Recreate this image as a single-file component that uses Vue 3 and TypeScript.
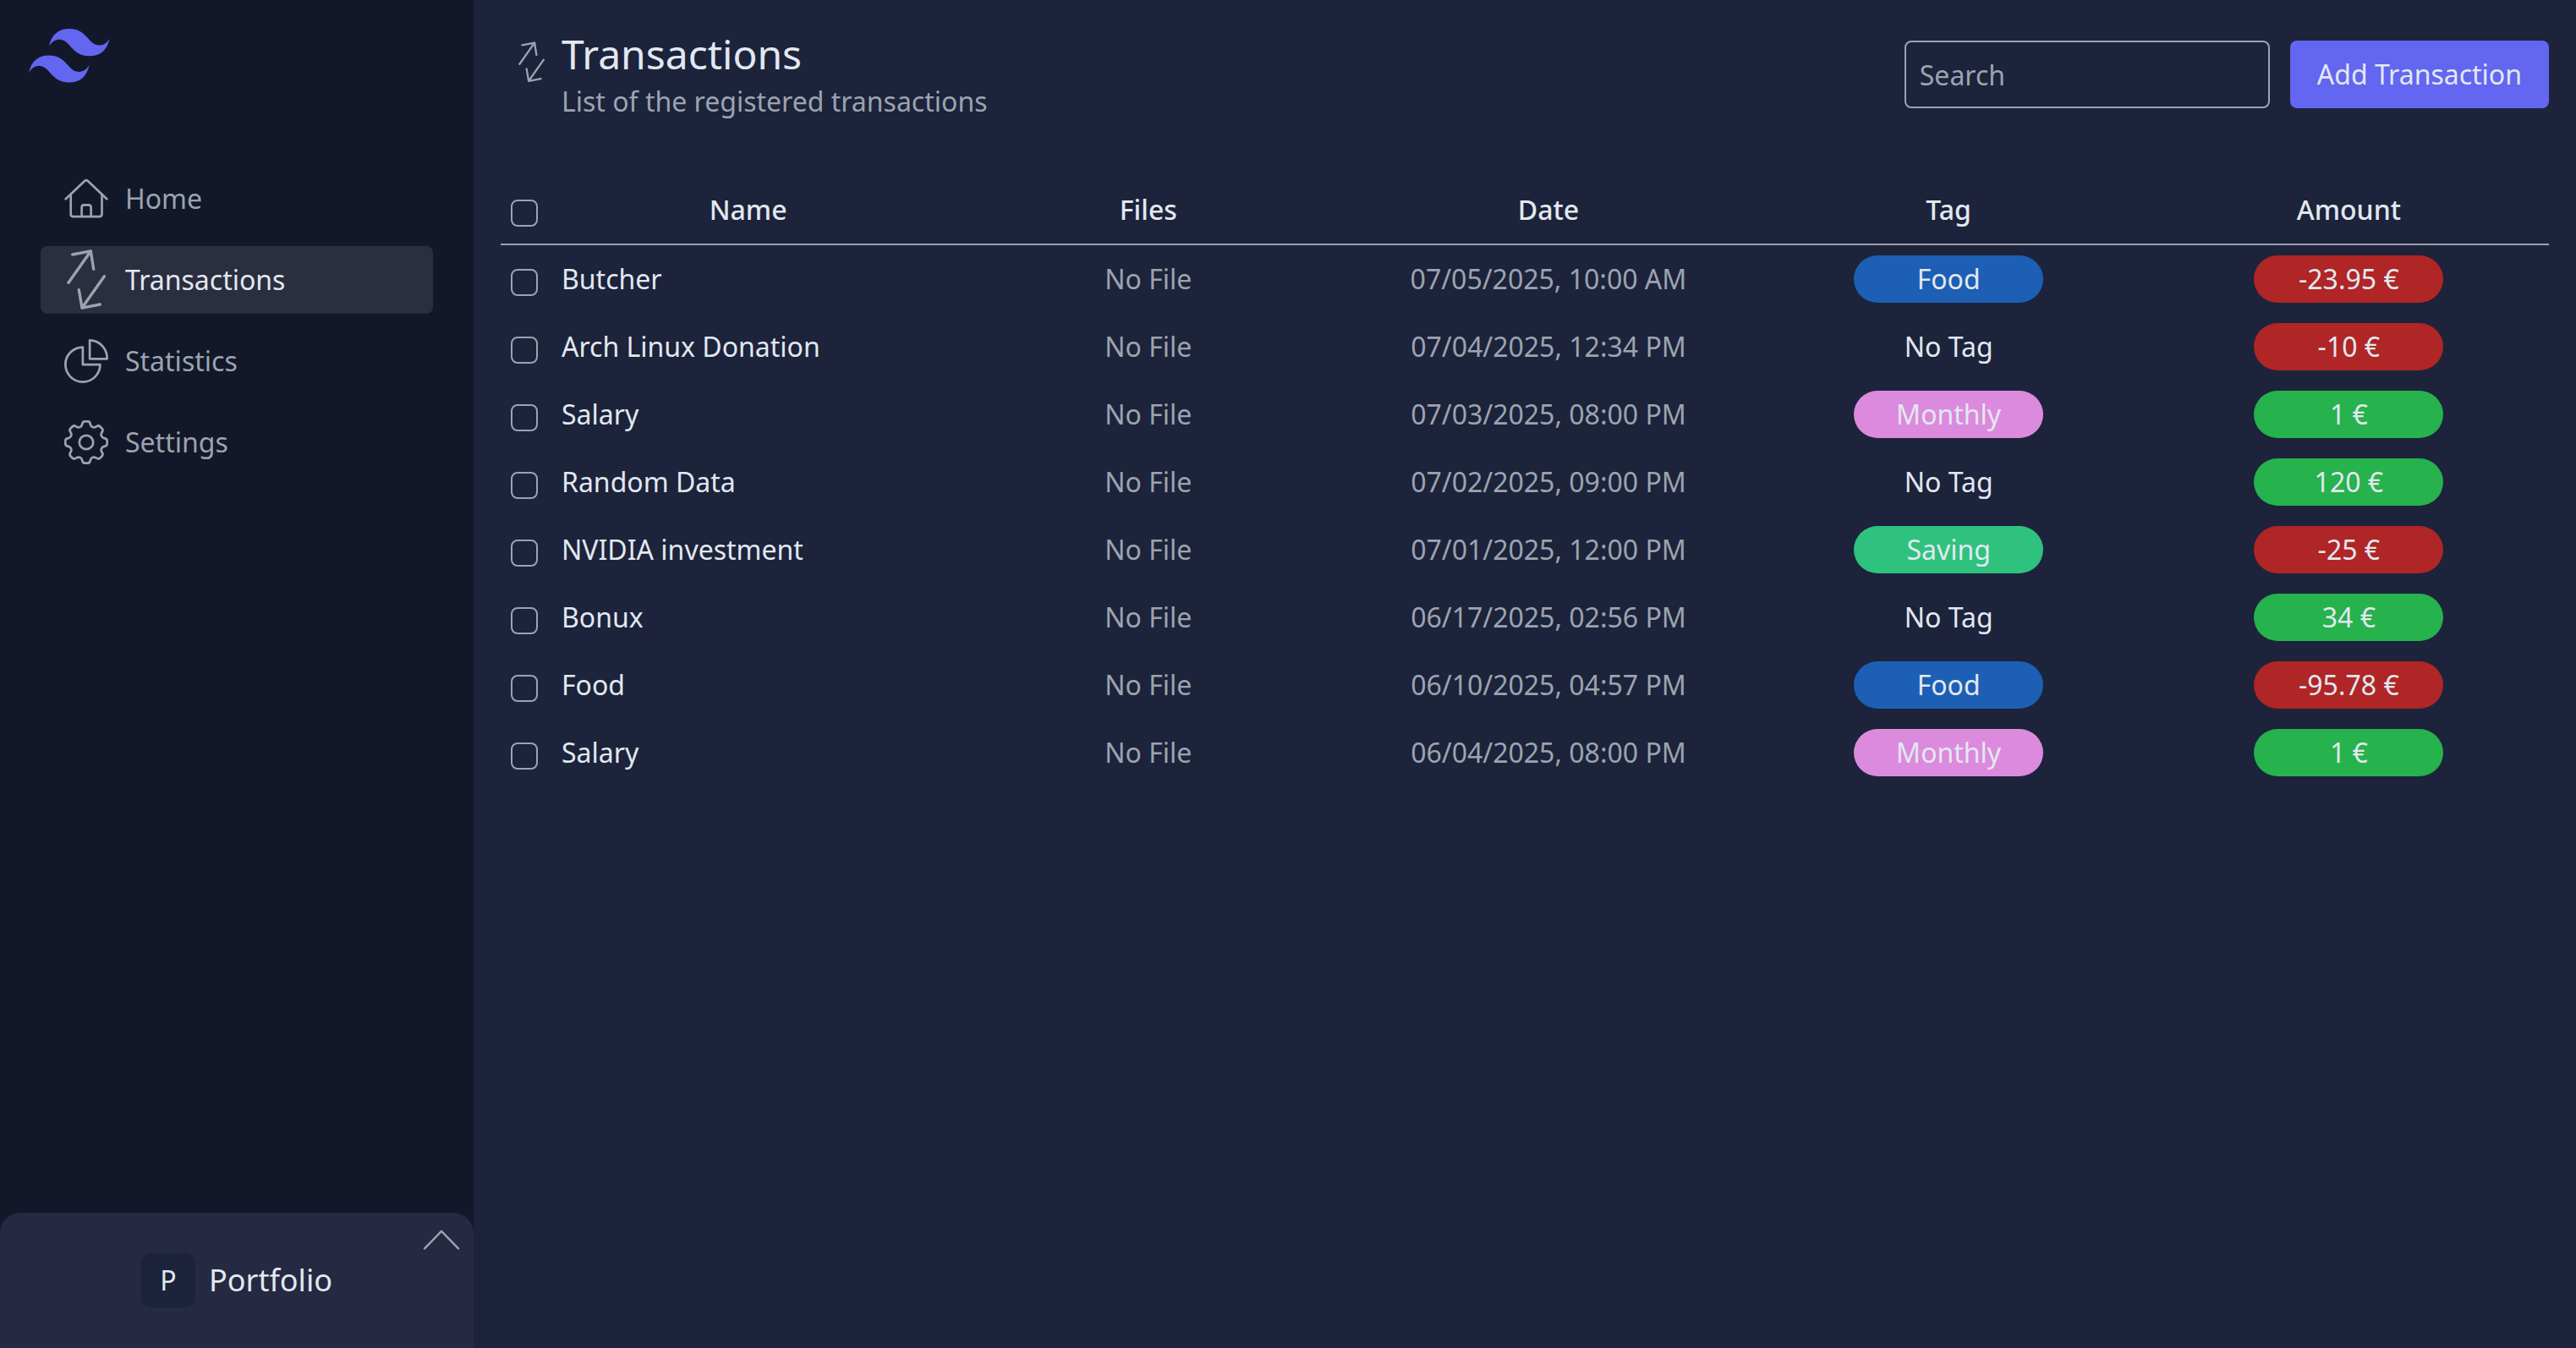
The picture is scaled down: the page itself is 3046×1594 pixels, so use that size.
<script setup lang="ts">
import { computed, ref } from 'vue'

interface Tag {
  label: string
  color: string
}

interface Transaction {
  id: number
  name: string
  date: string
  tag: Tag | null
  amount: number
}

interface NavItem {
  label: string
  icon: 'home' | 'transactions' | 'statistics' | 'settings'
}

const navItems: NavItem[] = [
  { label: 'Home', icon: 'home' },
  { label: 'Transactions', icon: 'transactions' },
  { label: 'Statistics', icon: 'statistics' },
  { label: 'Settings', icon: 'settings' },
]
const activeItem = ref('Transactions')

const food: Tag = { label: 'Food', color: '#1c5fb4' }
const monthly: Tag = { label: 'Monthly', color: '#dc8add' }
const saving: Tag = { label: 'Saving', color: '#2ec27e' }

const transactions: Transaction[] = [
  { id: 1, name: 'Butcher', date: '07/05/2025, 10:00 AM', tag: food, amount: -23.95 },
  { id: 2, name: 'Arch Linux Donation', date: '07/04/2025, 12:34 PM', tag: null, amount: -10 },
  { id: 3, name: 'Salary', date: '07/03/2025, 08:00 PM', tag: monthly, amount: 1 },
  { id: 4, name: 'Random Data', date: '07/02/2025, 09:00 PM', tag: null, amount: 120 },
  { id: 5, name: 'NVIDIA investment', date: '07/01/2025, 12:00 PM', tag: saving, amount: -25 },
  { id: 6, name: 'Bonux', date: '06/17/2025, 02:56 PM', tag: null, amount: 34 },
  { id: 7, name: 'Food', date: '06/10/2025, 04:57 PM', tag: food, amount: -95.78 },
  { id: 8, name: 'Salary', date: '06/04/2025, 08:00 PM', tag: monthly, amount: 1 },
]

const search = ref('')
const selected = ref<number[]>([])

const visible = computed(() =>
  transactions.filter((t) => t.name.toLowerCase().includes(search.value.toLowerCase())),
)
const allSelected = computed({
  get: () => visible.value.length > 0 && selected.value.length === visible.value.length,
  set: (on: boolean) => {
    selected.value = on ? visible.value.map((t) => t.id) : []
  },
})

// Outline of the eight-toothed gear: one tooth profile, repeated and with rounded corners.
function gearPath(): string {
  const profile = [
    { u: -5.4, r: 18.8, round: 2.4 },
    { u: -4, r: 24.7, round: 2.6 },
    { u: 4, r: 24.7, round: 2.6 },
    { u: 5.4, r: 18.8, round: 2.4 },
  ]
  const points = Array.from({ length: 8 }, (_, i) => (i * Math.PI) / 4).flatMap((a) =>
    profile.map((p) => ({
      x: 26 + p.u * Math.cos(a) + p.r * Math.sin(a),
      y: 26 + p.u * Math.sin(a) - p.r * Math.cos(a),
      round: p.round,
    })),
  )
  const parts = points.map((p, i) => {
    const prev = points[(i + points.length - 1) % points.length]
    const next = points[(i + 1) % points.length]
    const toward = (q: { x: number; y: number }) => {
      const d = Math.hypot(q.x - p.x, q.y - p.y)
      const k = Math.min(p.round, d / 2) / d
      return `${(p.x + (q.x - p.x) * k).toFixed(2)} ${(p.y + (q.y - p.y) * k).toFixed(2)}`
    }
    return `${i === 0 ? 'M' : 'L'}${toward(prev)}Q${p.x.toFixed(2)} ${p.y.toFixed(2)} ${toward(next)}`
  })
  return parts.join('') + 'Z'
}
const gear = gearPath()
const arrows =
  'M5 39.3 31.3 1.9M9.7 6 31.3 1.9 34.7 23.3M47.3 31.7 21 69.1M42.3 65 21 69.1 17.3 47.7'
</script>

<template>
  <div class="app">
    <aside class="sidebar">
      <a class="logo" href="#" aria-label="Dashboard">
        <svg width="96" height="64" viewBox="0 0 96 64" fill="currentColor" aria-hidden="true">
          <path
            id="wave"
            d="M24 20.6C27 6.9 35 0 47.7 0C59.7 0 65.5 6 70.5 11.8C73.5 15.2 76.3 18 80 19C86.3 20.6 91.5 18.2 95.6 11.7C92.6 25.4 84.5 32.2 71.7 32.2C59.7 32.2 54 26.2 49 20.4C46 17 43.3 14.2 39.6 13.2C33.3 11.6 28.1 14 24 20.6Z"
          />
          <use href="#wave" x="-24" y="31.4" />
        </svg>
      </a>

      <nav class="nav">
        <a
          v-for="item in navItems"
          :key="item.label"
          href="#"
          class="nav-item"
          :class="{ active: item.label === activeItem }"
          @click.prevent="activeItem = item.label"
        >
          <svg v-if="item.icon === 'home'" class="icon" width="52" height="52" viewBox="0 0 52 52" aria-hidden="true">
            <path d="M1.7 26.2 24.4 4.8Q26 3.3 27.6 4.8L50.3 26.2" />
            <path d="M7.7 21V44Q7.7 47.2 10.9 47.2H41.3Q44.5 47.2 44.5 44V21" />
            <path d="M20.6 47V36.3Q20.6 33.4 23.5 33.4H28.7Q31.6 33.4 31.6 36.3V47" />
          </svg>
          <svg v-else-if="item.icon === 'transactions'" class="icon bold" width="52" height="72" viewBox="0 0 52 72" aria-hidden="true">
            <path :d="arrows" />
          </svg>
          <svg v-else-if="item.icon === 'statistics'" class="icon unit" width="52" height="52" viewBox="2.5 2.5 19 19" aria-hidden="true">
            <path d="M10.5 6a7.5 7.5 0 1 0 7.5 7.5h-7.5V6Z" />
            <path d="M13.5 11H21A7.5 7.8 0 0 0 13.5 3v8Z" />
          </svg>
          <svg v-else class="icon" width="52" height="52" viewBox="0 0 52 52" aria-hidden="true">
            <path :d="gear" />
            <circle cx="26" cy="26" r="8.2" />
          </svg>
          <span>{{ item.label }}</span>
        </a>
      </nav>

      <button type="button" class="account">
        <span class="avatar">P</span>
        <span class="account-name">Portfolio</span>
        <svg class="chevron" width="44" height="24" viewBox="0 0 44 24" aria-hidden="true">
          <path d="M2 22.4 22 1.8 42 22.4" />
        </svg>
      </button>
    </aside>

    <main class="main">
      <header class="header">
        <div class="header-icon">
          <svg class="icon bold" width="35" height="49" viewBox="0 0 52 72" aria-hidden="true">
            <path :d="arrows" />
          </svg>
        </div>
        <div class="heading">
          <h1>Transactions</h1>
          <p>List of the registered transactions</p>
        </div>
        <input v-model="search" class="search" type="search" placeholder="Search" aria-label="Search" />
        <button type="button" class="add">Add Transaction</button>
      </header>

      <table class="table">
        <thead>
          <tr>
            <th class="check">
              <input v-model="allSelected" type="checkbox" aria-label="Select all transactions" />
            </th>
            <th scope="col">Name</th>
            <th scope="col">Files</th>
            <th scope="col">Date</th>
            <th scope="col">Tag</th>
            <th scope="col">Amount</th>
          </tr>
        </thead>
        <tbody>
          <tr v-for="t in visible" :key="t.id">
            <td class="check">
              <input v-model="selected" type="checkbox" :value="t.id" :aria-label="`Select ${t.name}`" />
            </td>
            <td class="name">{{ t.name }}</td>
            <td class="muted">No File</td>
            <td class="muted">{{ t.date }}</td>
            <td>
              <span v-if="t.tag" class="badge" :style="{ backgroundColor: t.tag.color }">{{ t.tag.label }}</span>
              <template v-else>No Tag</template>
            </td>
            <td>
              <span class="badge" :class="t.amount < 0 ? 'expense' : 'income'">{{ t.amount }} €</span>
            </td>
          </tr>
        </tbody>
      </table>
    </main>
  </div>
</template>

<style>
body {
  margin: 0;
  background: #1c233b;
}
</style>

<style scoped>
.app {
  display: flex;
  min-height: 100vh;
  font-family: 'Noto Sans', sans-serif;
  font-size: 32px;
  line-height: 48px;
  color: #e2e8f0;
  background: #1c233b;
}

.app *,
.app {
  box-sizing: border-box;
}

button,
input {
  margin: 0;
  font: inherit;
  color: inherit;
}

.sidebar {
  display: flex;
  flex-direction: column;
  flex: 0 0 560px;
  background: #121829;
}

.logo {
  display: flex;
  padding: 34px;
  color: #6366f1;
}

.nav {
  display: flex;
  flex-direction: column;
  gap: 16px;
  padding: 63px 48px 0;
}

.nav-item {
  display: flex;
  align-items: center;
  gap: 20px;
  height: 80px;
  padding: 0 28px;
  border-radius: 8px;
  color: #9ca3af;
  text-decoration: none;
}

.nav-item.active {
  background: #2a2e3f;
}

.nav-item.active span {
  color: #e2e8f0;
}

.icon {
  flex: none;
  fill: none;
  stroke: #9ca3af;
  stroke-width: 2.7;
  stroke-linecap: round;
  stroke-linejoin: round;
}

.icon.bold {
  stroke-width: 3.4;
}

.icon.unit {
  stroke-width: 1;
}

.account {
  position: relative;
  display: flex;
  align-items: center;
  justify-content: center;
  gap: 16px;
  height: 160px;
  margin-top: auto;
  padding: 0;
  border: 0;
  border-radius: 24px 24px 0 0;
  background: #252941;
}

.avatar {
  width: 64px;
  height: 64px;
  border-radius: 12px;
  line-height: 64px;
  text-align: center;
  background: #1c233b;
}

.account-name {
  font-size: 36px;
}

.chevron {
  position: absolute;
  top: 20px;
  right: 16px;
  fill: none;
  stroke: #9ca3af;
  stroke-width: 2.4;
  stroke-linecap: round;
  stroke-linejoin: round;
}

.main {
  flex: 1;
  min-width: 0;
  padding: 32px;
}

.header {
  display: flex;
  align-items: center;
  gap: 24px;
  margin-bottom: 64px;
}

.header-icon {
  display: flex;
  align-self: flex-start;
  justify-content: center;
  width: 72px;
  margin-right: -24px;
  padding-top: 17px;
}

.heading {
  flex: 1;
}

h1,
p {
  margin: 0;
  font-weight: 400;
}

h1 {
  font-size: 48px;
  line-height: 64px;
}

p {
  color: #9ca3af;
}

.search {
  width: 432px;
  height: 80px;
  padding: 0 16px;
  border: 2px solid #9ca3af;
  border-radius: 8px;
  background: transparent;
  appearance: none;
}

.search::placeholder {
  color: #9ca3af;
  opacity: 1;
}

.add {
  height: 80px;
  padding: 0 32px;
  border: 0;
  border-radius: 8px;
  background: #6366f1;
}

.table {
  width: 100%;
  border-collapse: separate;
  border-spacing: 0;
  table-layout: fixed;
  text-align: center;
}

th,
td {
  height: 80px;
  padding: 0;
  vertical-align: middle;
}

th {
  height: 82px;
  border-bottom: 2px solid #9ca3af;
  font-weight: 500;
}

.check {
  width: 56px;
  padding: 8px 0 0 12px;
  line-height: 0;
  text-align: left;
}

.check input {
  width: 32px;
  height: 32px;
  border: 2px solid #9ca3af;
  border-radius: 8px;
  appearance: none;
}

.check input:checked {
  background: #6366f1;
}

.name {
  padding-left: 16px;
  text-align: left;
}

.muted {
  color: #9ca3af;
}

.badge {
  display: block;
  width: 224px;
  margin: 0 auto;
  padding: 4px 0;
  border-radius: 28px;
}

.expense {
  background: #b02525;
}

.income {
  background: #26b24c;
}
</style>
